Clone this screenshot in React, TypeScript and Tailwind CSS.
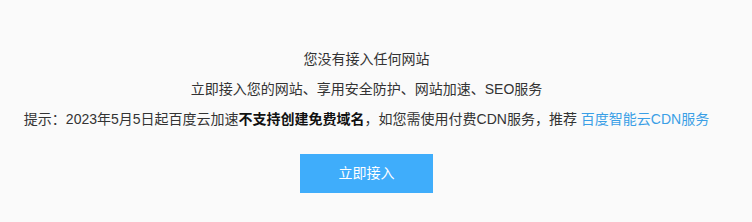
export default function App() {
  return (
    <div
      className="min-h-screen w-full bg-[#fafafa] text-[#333] flex flex-col items-center pt-[44px] pr-[19px]"
      style={{ fontFamily: '"Liberation Sans", "Noto Sans CJK SC", sans-serif' }}
    >
      <p className="text-[14px] leading-[30px]">您没有接入任何网站</p>
      <p className="text-[14px] leading-[30px]">立即接入您的网站、享用安全防护、网站加速、SEO服务</p>
      <p className="text-[14px] leading-[30px]">
        提示：2023年5月5日起百度云加速<b className="font-bold text-[#111]">不支持创建免费域名</b>，如您需使用付费CDN服务，推荐{" "}
        <a className="text-[#3a9fe6] cursor-pointer">百度智能云CDN服务</a>
      </p>
      <button className="mt-[20px] w-[133px] h-[39px] bg-[#3fadfb] text-white text-[14px]">
        立即接入
      </button>
    </div>
  );
}
